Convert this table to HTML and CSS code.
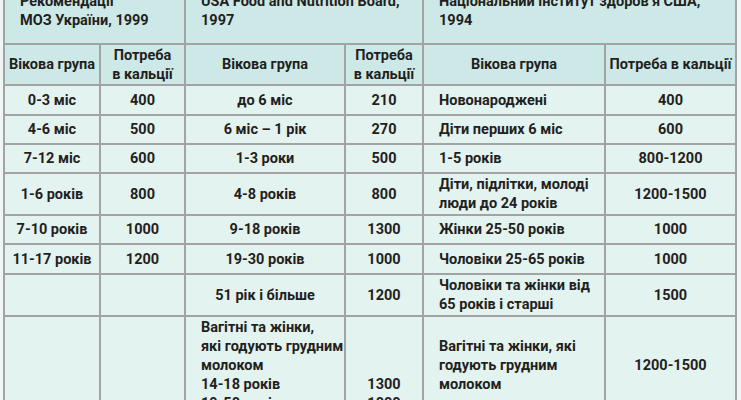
FILE: index.html
```html
<!DOCTYPE html>
<html lang="uk">
<head>
<meta charset="utf-8">
<title>Потреба в кальції</title>
<link rel="stylesheet" href="styles.css">
</head>
<body>
<div class="table">
  <div class="cell title span2">Рекомендації<br>МОЗ України, 1999</div>
  <div class="cell title span2">USA Food and Nutrition Board,<br>1997</div>
  <div class="cell title span2">Національний інститут здоров’я США,<br>1994</div>

  <div class="cell head">Вікова група</div>
  <div class="cell head">Потреба<br>в кальції</div>
  <div class="cell head">Вікова група</div>
  <div class="cell head">Потреба<br>в кальції</div>
  <div class="cell head">Вікова група</div>
  <div class="cell head">Потреба в кальції</div>

  <div class="cell">0-3 міс</div>
  <div class="cell">400</div>
  <div class="cell">до 6 міс</div>
  <div class="cell">210</div>
  <div class="cell left">Новонароджені</div>
  <div class="cell">400</div>

  <div class="cell">4-6 міс</div>
  <div class="cell">500</div>
  <div class="cell">6 міс – 1 рік</div>
  <div class="cell">270</div>
  <div class="cell left">Діти перших 6 міс</div>
  <div class="cell">600</div>

  <div class="cell">7-12 міс</div>
  <div class="cell">600</div>
  <div class="cell">1-3 роки</div>
  <div class="cell">500</div>
  <div class="cell left">1-5 років</div>
  <div class="cell">800-1200</div>

  <div class="cell">1-6 років</div>
  <div class="cell">800</div>
  <div class="cell">4-8 років</div>
  <div class="cell">800</div>
  <div class="cell left">Діти, підлітки, молоді<br>люди до 24 років</div>
  <div class="cell">1200-1500</div>

  <div class="cell">7-10 років</div>
  <div class="cell">1000</div>
  <div class="cell">9-18 років</div>
  <div class="cell">1300</div>
  <div class="cell left">Жінки 25-50 років</div>
  <div class="cell">1000</div>

  <div class="cell">11-17 років</div>
  <div class="cell">1200</div>
  <div class="cell">19-30 років</div>
  <div class="cell">1000</div>
  <div class="cell left">Чоловіки 25-65 років</div>
  <div class="cell">1000</div>

  <div class="cell"></div>
  <div class="cell"></div>
  <div class="cell">51 рік і більше</div>
  <div class="cell">1200</div>
  <div class="cell left">Чоловіки та жінки від<br>65 років і старші</div>
  <div class="cell">1500</div>

  <div class="cell"></div>
  <div class="cell"></div>
  <div class="cell left tall">Вагітні та жінки,<br>які годують грудним<br>молоком<br>14-18 років<br>19-50 років</div>
  <div class="cell tall">&nbsp;<br>&nbsp;<br>&nbsp;<br>1300<br>1000</div>
  <div class="cell left">Вагітні та жінки, які<br>годують грудним<br>молоком</div>
  <div class="cell">1200-1500</div>
</div>
</body>
</html>
```

FILE: styles.css
```css
html, body {
  margin: 0;
  padding: 0;
  background: #eef7f6;
  overflow: hidden;
}

.table {
  display: grid;
  grid-template-columns: 94px 83px 158px 76px 180px 129px;
  grid-template-rows: 45px 39px 28px 27px 27px 40px 27px 28px 40px 96px;
  gap: 2px;
  padding: 2px;
  background: #a3a3a3;
  width: max-content;
  margin: -4px 0 0 3px;
  font-family: Roboto, "Noto Sans", "DejaVu Sans", sans-serif;
  font-weight: 700;
  font-size: 14.5px;
  line-height: 19px;
  color: #231f20;
}

.cell {
  background: #e3f3f0;
  display: flex;
  align-items: center;
  justify-content: center;
  text-align: center;
  white-space: nowrap;
}

.cell.left {
  justify-content: flex-start;
  text-align: left;
  padding-left: 15px;
}

.cell.title {
  background: #cde9e7;
  align-items: flex-end;
  justify-content: flex-start;
  text-align: left;
  padding: 0 0 13px 15px;
}

.span2 {
  grid-column: span 2;
}

.cell.head {
  background: #cde9e7;
}
```
